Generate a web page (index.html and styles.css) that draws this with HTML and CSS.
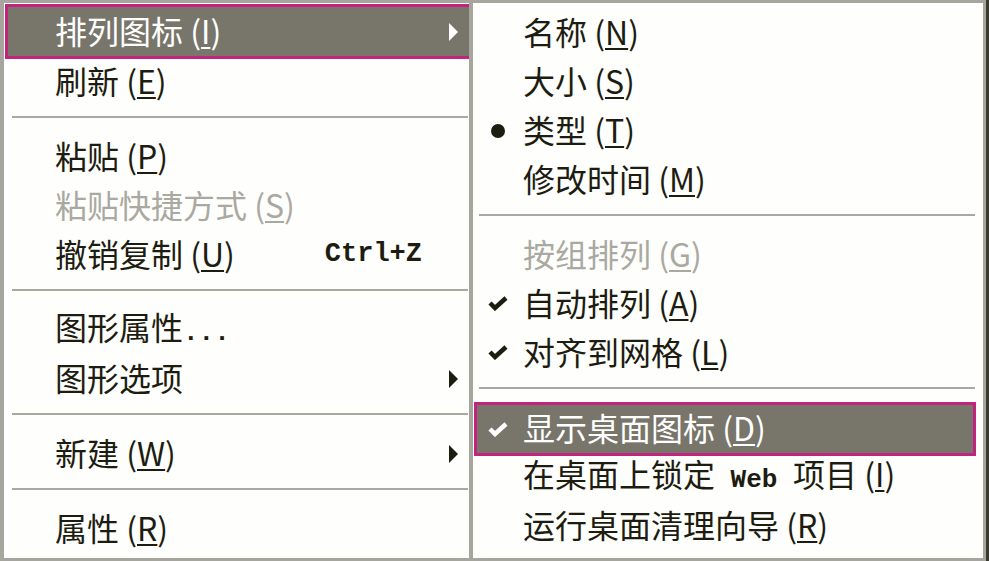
FILE: index.html
```html
<!DOCTYPE html>
<html lang="zh-CN">
<head>
    <meta charset="UTF-8">
    <title>桌面右键菜单</title>
    <link rel="stylesheet" href="styles.css">
</head>
<body>

    <div class="desk">
        <div class="menu main">
            <div class="item hi">
                <span class="label">排列图标 (<u>I</u>)</span>
                <span class="arrow"></span>
            </div>
            <div class="item"><span class="label">刷新 (<u>E</u>)</span></div>
            <div class="sep"></div>
            <div class="item"><span class="label">粘贴 (<u>P</u>)</span></div>
            <div class="item off"><span class="label">粘贴快捷方式 (<u>S</u>)</span></div>
            <div class="item">
                <span class="label">撤销复制 (<u>U</u>)</span>
                <span class="key">Ctrl+Z</span>
            </div>
            <div class="sep"></div>
            <div class="item"><span class="label">图形属性<span class="mono">...</span></span></div>
            <div class="item">
                <span class="label">图形选项</span>
                <span class="arrow"></span>
            </div>
            <div class="sep"></div>
            <div class="item">
                <span class="label">新建 (<u>W</u>)</span>
                <span class="arrow"></span>
            </div>
            <div class="sep"></div>
            <div class="item"><span class="label">属性 (<u>R</u>)</span></div>
        </div>

        <div class="menu sub">
            <div class="item"><span class="mark"></span><span class="label">名称 (<u>N</u>)</span></div>
            <div class="item"><span class="mark"></span><span class="label">大小 (<u>S</u>)</span></div>
            <div class="item"><span class="mark"><span class="dot"></span></span><span class="label">类型 (<u>T</u>)</span></div>
            <div class="item"><span class="mark"></span><span class="label">修改时间 (<u>M</u>)</span></div>
            <div class="sep"></div>
            <div class="item off"><span class="mark"></span><span class="label">按组排列 (<u>G</u>)</span></div>
            <div class="item">
                <span class="mark"><svg class="check" viewBox="0 0 20 15"><polyline points="2,7 7,12 18,2"/></svg></span>
                <span class="label">自动排列 (<u>A</u>)</span>
            </div>
            <div class="item">
                <span class="mark"><svg class="check" viewBox="0 0 20 15"><polyline points="2,7 7,12 18,2"/></svg></span>
                <span class="label">对齐到网格 (<u>L</u>)</span>
            </div>
            <div class="sep"></div>
            <div class="item hi">
                <span class="mark"><svg class="check" viewBox="0 0 20 15"><polyline points="2,7 7,12 18,2"/></svg></span>
                <span class="label">显示桌面图标 (<u>D</u>)</span>
            </div>
            <div class="item"><span class="mark"></span><span class="label">在桌面上锁定<span class="mono"> Web </span>项目 (<u>I</u>)</span></div>
            <div class="item"><span class="mark"></span><span class="label">运行桌面清理向导 (<u>R</u>)</span></div>
        </div>
    </div>

</body>
</html>
```

FILE: styles.css
```css
body {
    margin: 0;
    background-color: #a6a69e;
    font-family: "Noto Sans CJK SC", "Noto Sans", sans-serif;
    color: #1d1c10;
    overflow: hidden;
}

.desk {
    display: flex;
    height: 561px;
}

.menu {
    box-sizing: border-box;
    height: 561px;
    background: #fefefc;
    border: 0 solid #a6a69e;
    padding-top: 5px;
    overflow: hidden;
}

.main {
    width: 471px;
    border-width: 3px 2px 3px 4px;
}

.sub {
    width: 515px;
    border-width: 3px 3px 3px 2px;
    box-shadow: 3px 0 0 #3a392e;
}

.item {
    box-sizing: border-box;
    display: flex;
    align-items: center;
    height: 49px;
    font-size: 32px;
    line-height: 1;
    white-space: nowrap;
}

.label {
    position: relative;
    top: -2px;
}

.main .item {
    padding: 0 11px 0 51px;
}

.item u {
    text-decoration-thickness: 2px;
    text-underline-offset: 3px;
}

.item.off {
    color: #aaa9a1;
}

.item.hi {
    background-color: #78756a;
    color: #ffffff;
    border: 3px solid #c2247d;
}

.main .item.hi {
    height: 55px;
    margin: -4px -3px -2px 1px;
    padding-left: 47px;
}

.sub .item.hi {
    height: 54px;
    margin: -1px 7px -4px 1px;
}

.mono {
    font-family: "Liberation Mono", monospace;
    font-size: 26px;
    font-weight: bold;
}

.key {
    margin-left: auto;
    margin-right: 36px;
    font-family: "Liberation Mono", monospace;
    font-size: 27px;
    font-weight: bold;
}

.arrow {
    margin-left: auto;
    width: 0;
    height: 0;
    border-left: 9px solid #1d1c10;
    border-top: 9px solid transparent;
    border-bottom: 9px solid transparent;
}

.hi .arrow {
    border-left-color: #ffffff;
}

.mark {
    flex-shrink: 0;
    display: flex;
    align-items: center;
    width: 50px;
    height: 100%;
}

.sub .hi .mark {
    width: 46px;
}

.check {
    width: 20px;
    height: 15px;
    margin-left: 15px;
    fill: none;
    stroke: #1d1c10;
    stroke-width: 4.5;
}

.hi .check {
    margin-left: 11px;
    stroke: #ffffff;
}

.dot {
    width: 14px;
    height: 14px;
    margin-left: 18px;
    border-radius: 50%;
    background-color: #1d1c10;
}

.sep {
    box-sizing: border-box;
    height: 26px;
    padding-top: 10px;
}

.sep::after {
    content: "";
    display: block;
    height: 2px;
    background-color: #a9a9a1;
}

.main .sep::after {
    margin-left: 8px;
    margin-right: 1px;
}

.sub .sep::after {
    margin-left: 6px;
    margin-right: 8px;
}
```
